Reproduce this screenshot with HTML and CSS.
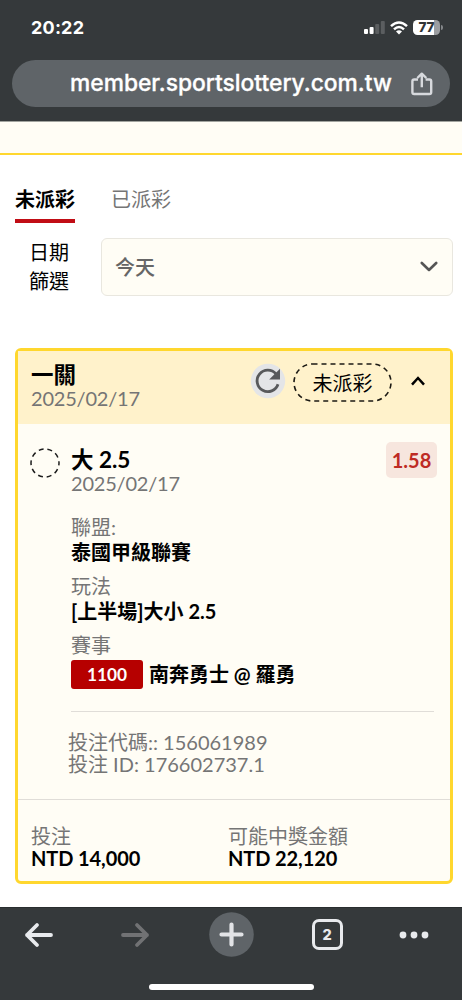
FILE: index.html
```html
<!DOCTYPE html>
<html lang="zh-Hant">
<head>
<meta charset="utf-8">
<title>member.sportslottery.com.tw</title>
<link rel="stylesheet" href="styles.css">
</head>
<body>
<div class="screen">
  <header class="top">
    <div class="status">
      <span class="clock">20:22</span>
      <div class="status-icons">
        <svg width="21" height="13" viewBox="0 0 21 13"><rect x="0" y="8" width="4" height="5" rx="1" fill="#fff"/><rect x="5.6" y="6" width="4" height="7" rx="1" fill="#fff"/><rect x="11.2" y="3" width="4" height="10" rx="1" fill="#5b5e60"/><rect x="16.8" y="0" width="4" height="13" rx="1" fill="#5b5e60"/></svg>
        <svg class="wifi" width="18" height="14" viewBox="0 0 18 14" fill="none" stroke="#fff" stroke-width="2.5"><path d="M1 5.2Q9-2.2 17 5.2"/><path d="M4 8.3Q9 3.7 14 8.3"/><path d="M6 10.4Q9 7.9 12 10.4L9 13.4Z" fill="#fff" stroke="none"/></svg>
        <div class="battery"><span class="level">77</span><i class="nub"></i></div>
      </div>
    </div>
    <div class="address">
      <span class="url">member.sportslottery.com.tw</span>
      <svg class="share" width="22" height="24" viewBox="0 0 22 24" fill="none" stroke="#d7d9dd" stroke-width="2.4" stroke-linejoin="round"><path d="M7 7.5H3.2Q1.4 7.5 1.4 9.3V20.2Q1.4 22 3.2 22H18.4Q20.2 22 20.2 20.2V9.3Q20.2 7.5 18.4 7.5H14.6"/><path d="M10.8 15.3V2M6.3 6L10.8 1.7 15.3 6"/></svg>
    </div>
  </header>

  <div class="banner"></div>

  <main class="page">
    <nav class="tabs">
      <a class="tab active">未派彩</a>
      <a class="tab">已派彩</a>
    </nav>
    <div class="filter">
      <div class="filter-label">日期<br>篩選</div>
      <div class="select"><span>今天</span>
        <svg width="18" height="12" viewBox="0 0 18 12" fill="none" stroke="#555" stroke-width="2.6" stroke-linecap="round" stroke-linejoin="round"><path d="M1.8 3L9 10 16.2 3"/></svg>
      </div>
    </div>

    <section class="card">
      <div class="card-head">
        <div class="head-text">
          <div class="title">一關</div>
          <div class="muted">2025/02/17</div>
        </div>
        <svg class="refresh" width="36" height="36" viewBox="0 0 36 36"><circle cx="18" cy="18" r="17.2" fill="#e4e5e7"/><path d="M28 21.2A10.7 10.7 0 1 1 26 11" fill="none" stroke="#58595b" stroke-width="2.8"/><path d="M30 5.8V16.6H19.2Z" fill="#58595b"/></svg>
        <div class="badge">
          <svg class="outline" width="99" height="39" viewBox="0 0 99 39"><rect x="1" y="1" width="97" height="37" rx="18.5" fill="none" stroke="#1c1a14" stroke-width="1.6" stroke-dasharray="5 4"/></svg>
          <span>未派彩</span>
        </div>
        <svg class="caret" width="14" height="10" viewBox="0 0 14 10" fill="none" stroke="#000" stroke-width="2.5"><path d="M1 8.6L7 2 13 8.6"/></svg>
      </div>

      <div class="card-body">
        <svg class="ring" width="30" height="30" viewBox="0 0 30 30"><circle cx="15" cy="15" r="14" fill="none" stroke="#1c1c1c" stroke-width="1.5" stroke-dasharray="4.9 3.9" stroke-dashoffset="2.4"/></svg>
        <div class="bet">
          <div class="pick">
            <div>
              <div class="title">大 2.5</div>
              <div class="muted">2025/02/17</div>
            </div>
            <span class="odds">1.58</span>
          </div>
          <div class="field league"><div class="muted">聯盟:</div><div class="strong">泰國甲級聯賽</div></div>
          <div class="field"><div class="muted">玩法</div><div class="strong">[上半場]大小 2.5</div></div>
          <div class="field"><div class="muted">賽事</div>
            <div class="match"><span class="code">1100</span><span class="strong">南奔勇士 @ 羅勇</span></div>
          </div>
          <div class="ids">
            <div>投注代碼:: 156061989</div>
            <div>投注 ID: 176602737.1</div>
          </div>
        </div>
      </div>

      <div class="card-foot">
        <div class="amount"><div class="muted">投注</div><div class="strong">NTD 14,000</div></div>
        <div class="amount"><div class="muted">可能中獎金額</div><div class="strong">NTD 22,120</div></div>
      </div>
    </section>
  </main>

  <footer class="toolbar">
    <div class="tools">
      <div class="tool"><svg width="30" height="26" viewBox="0 0 30 26" fill="none" stroke="#e8eaed" stroke-width="3.8" stroke-linecap="round" stroke-linejoin="round"><path d="M27 13H3M13 3L3 13 13 23"/></svg></div>
      <div class="tool"><svg width="30" height="26" viewBox="0 0 30 26" fill="none" stroke="#717274" stroke-width="3.8" stroke-linecap="round" stroke-linejoin="round"><path d="M3 13H27M17 3L27 13 17 23"/></svg></div>
      <div class="tool"><svg width="45" height="45" viewBox="0 0 45 45"><circle cx="22.5" cy="22.5" r="22.3" fill="#5f6468"/><path d="M22.5 12.5V32.5M12.5 22.5H32.5" stroke="#e2e3e6" stroke-width="4.2" stroke-linecap="round"/></svg></div>
      <div class="tool"><div class="tab-count">2</div></div>
      <div class="tool more"><svg width="30" height="8" viewBox="0 0 30 8" fill="#e8eaed"><circle cx="4" cy="4" r="3.4"/><circle cx="15" cy="4" r="3.4"/><circle cx="26" cy="4" r="3.4"/></svg></div>
    </div>
    <div class="home"></div>
  </footer>
</div>
</body>
</html>
```
FILE: styles.css
```css
* { box-sizing: border-box; }
body { margin: 0; background: #fff; font-family: Lato, "Noto Sans CJK TC", sans-serif; font-size: 20px; color: #000; }
svg { display: block; flex: none; }
.screen { width: 462px; height: 1000px; display: flex; flex-direction: column; overflow: hidden; }

.top { height: 122px; flex: none; background: #35393b; border-bottom: 1px solid #a2a49f; font-family: Inter, sans-serif; color: #fff; }
.status { height: 60px; padding: 0 19px 5px 31px; display: flex; justify-content: space-between; align-items: center; }
.clock { font-weight: 700; font-size: 18px; letter-spacing: 0.2px; }
.status-icons { display: flex; align-items: center; }
.wifi { margin-left: 5px; }
.battery { margin-left: 5px; display: flex; align-items: center; }
.level { width: 27px; height: 15px; border-radius: 4.5px; background: linear-gradient(to right, #fff 21px, #9b9da0 21px); color: #303436; font-size: 13.5px; font-weight: 800; line-height: 15px; text-align: center; }
.nub { width: 2px; height: 5px; margin-left: 1px; border-radius: 0 2px 2px 0; background: #84878a; }
.address { margin: 0 12px; height: 47px; border-radius: 24px; background: #5f6468; display: flex; align-items: center; justify-content: space-between; padding: 0 17px 0 58px; }
.url { font-size: 22.8px; font-weight: 500; -webkit-text-stroke: 0.3px #fff; line-height: 46px; height: 47px; white-space: nowrap; }

.banner { height: 33px; flex: none; background: #fffdf5; border-bottom: 2px solid #ffd72e; }

.page { flex: 1; padding: 23px 9px 0 15px; }
.tabs { display: flex; gap: 36px; height: 45px; }
.tab { height: 45px; line-height: 42px; color: #757575; }
.tab.active { color: #000; font-weight: 700; border-bottom: 4px solid #c10d15; }
.filter { display: flex; align-items: center; margin-top: 15px; height: 58px; }
.filter-label { width: 86px; padding-left: 14px; line-height: 29px; }
.select { flex: 1; height: 58px; border: 1.5px solid #e9e7df; border-radius: 6px; background: #fffdf5; display: flex; justify-content: space-between; align-items: center; padding: 0 14px 2px 13px; font-weight: 500; color: #666; }

.card { margin-top: 52px; height: 536px; border: 3px solid #ffd72e; border-radius: 6px; background: #fffdf5; }
.title { font-size: 22.5px; line-height: 26px; height: 24px; font-weight: 700; }
.muted { color: #757575; line-height: 24px; }
.title + .muted { letter-spacing: -0.2px; }
.strong { font-weight: 700; line-height: 24px; white-space: nowrap; }
.card-head { height: 73px; background: #fff2cb; display: flex; padding: 11px 25px 0 13px; }
.head-text { flex: 1; }
.refresh { margin-right: 7px; margin-top: 1px; }
.badge { position: relative; width: 99px; height: 39px; margin-top: 1px; line-height: 40px; text-align: center; }
.outline { position: absolute; inset: 0; }
.caret { margin: 14px 0 0 19px; }
.card-body { height: 375px; display: flex; padding: 23px 13px 0 13px; }
.ring { margin: 1px 10px 0 -1px; }
.bet { flex: 1; padding-left: 1px; }
.pick { display: flex; justify-content: space-between; align-items: flex-start; }
.odds { width: 51px; height: 36px; margin-top: -5px; border-radius: 5px; background: #f7e6de; color: #be2b24; font-weight: 700; line-height: 36px; text-align: center; }
.field { height: 59px; }
.field .muted { line-height: 22px; height: 24px; }
.league { margin-top: 21px; }
.match { display: flex; align-items: center; gap: 6px; margin-top: 2px; }
.match .strong { height: 26px; }
.code { width: 72px; height: 29px; border-radius: 3px; background: #b60000; color: #fff; font-size: 17.3px; font-weight: 700; line-height: 29px; text-align: center; }
.ids { border-top: 1px solid #e0ddd8; margin: 18px 3px 0 0; padding-top: 19px; line-height: 22px; color: #757575; }
.ids div { margin-left: -3px; }
.card-foot { height: 82px; border-top: 1px solid #e0ddd8; display: flex; padding: 25px 13px 0; }
.amount { width: 197px; }
.amount .muted, .amount .strong { line-height: 22px; }
.amount .strong { letter-spacing: -0.1px; }

.toolbar { height: 93px; flex: none; background: #35393b; border-top: 1px solid #292d2f; }
.tools { display: grid; grid-template-columns: repeat(5, 96px); justify-content: center; height: 53px; }
.tool { display: flex; align-items: center; justify-content: center; }
.more { padding-right: 19px; }
.tab-count { width: 31px; height: 31px; border: 3px solid #e8eaed; border-radius: 7px; color: #e8eaed; font: 800 14.5px/26px Inter, sans-serif; text-align: center; }
.home { width: 165px; height: 6px; border-radius: 3px; background: #fff; margin: 23px auto 0; }
```
